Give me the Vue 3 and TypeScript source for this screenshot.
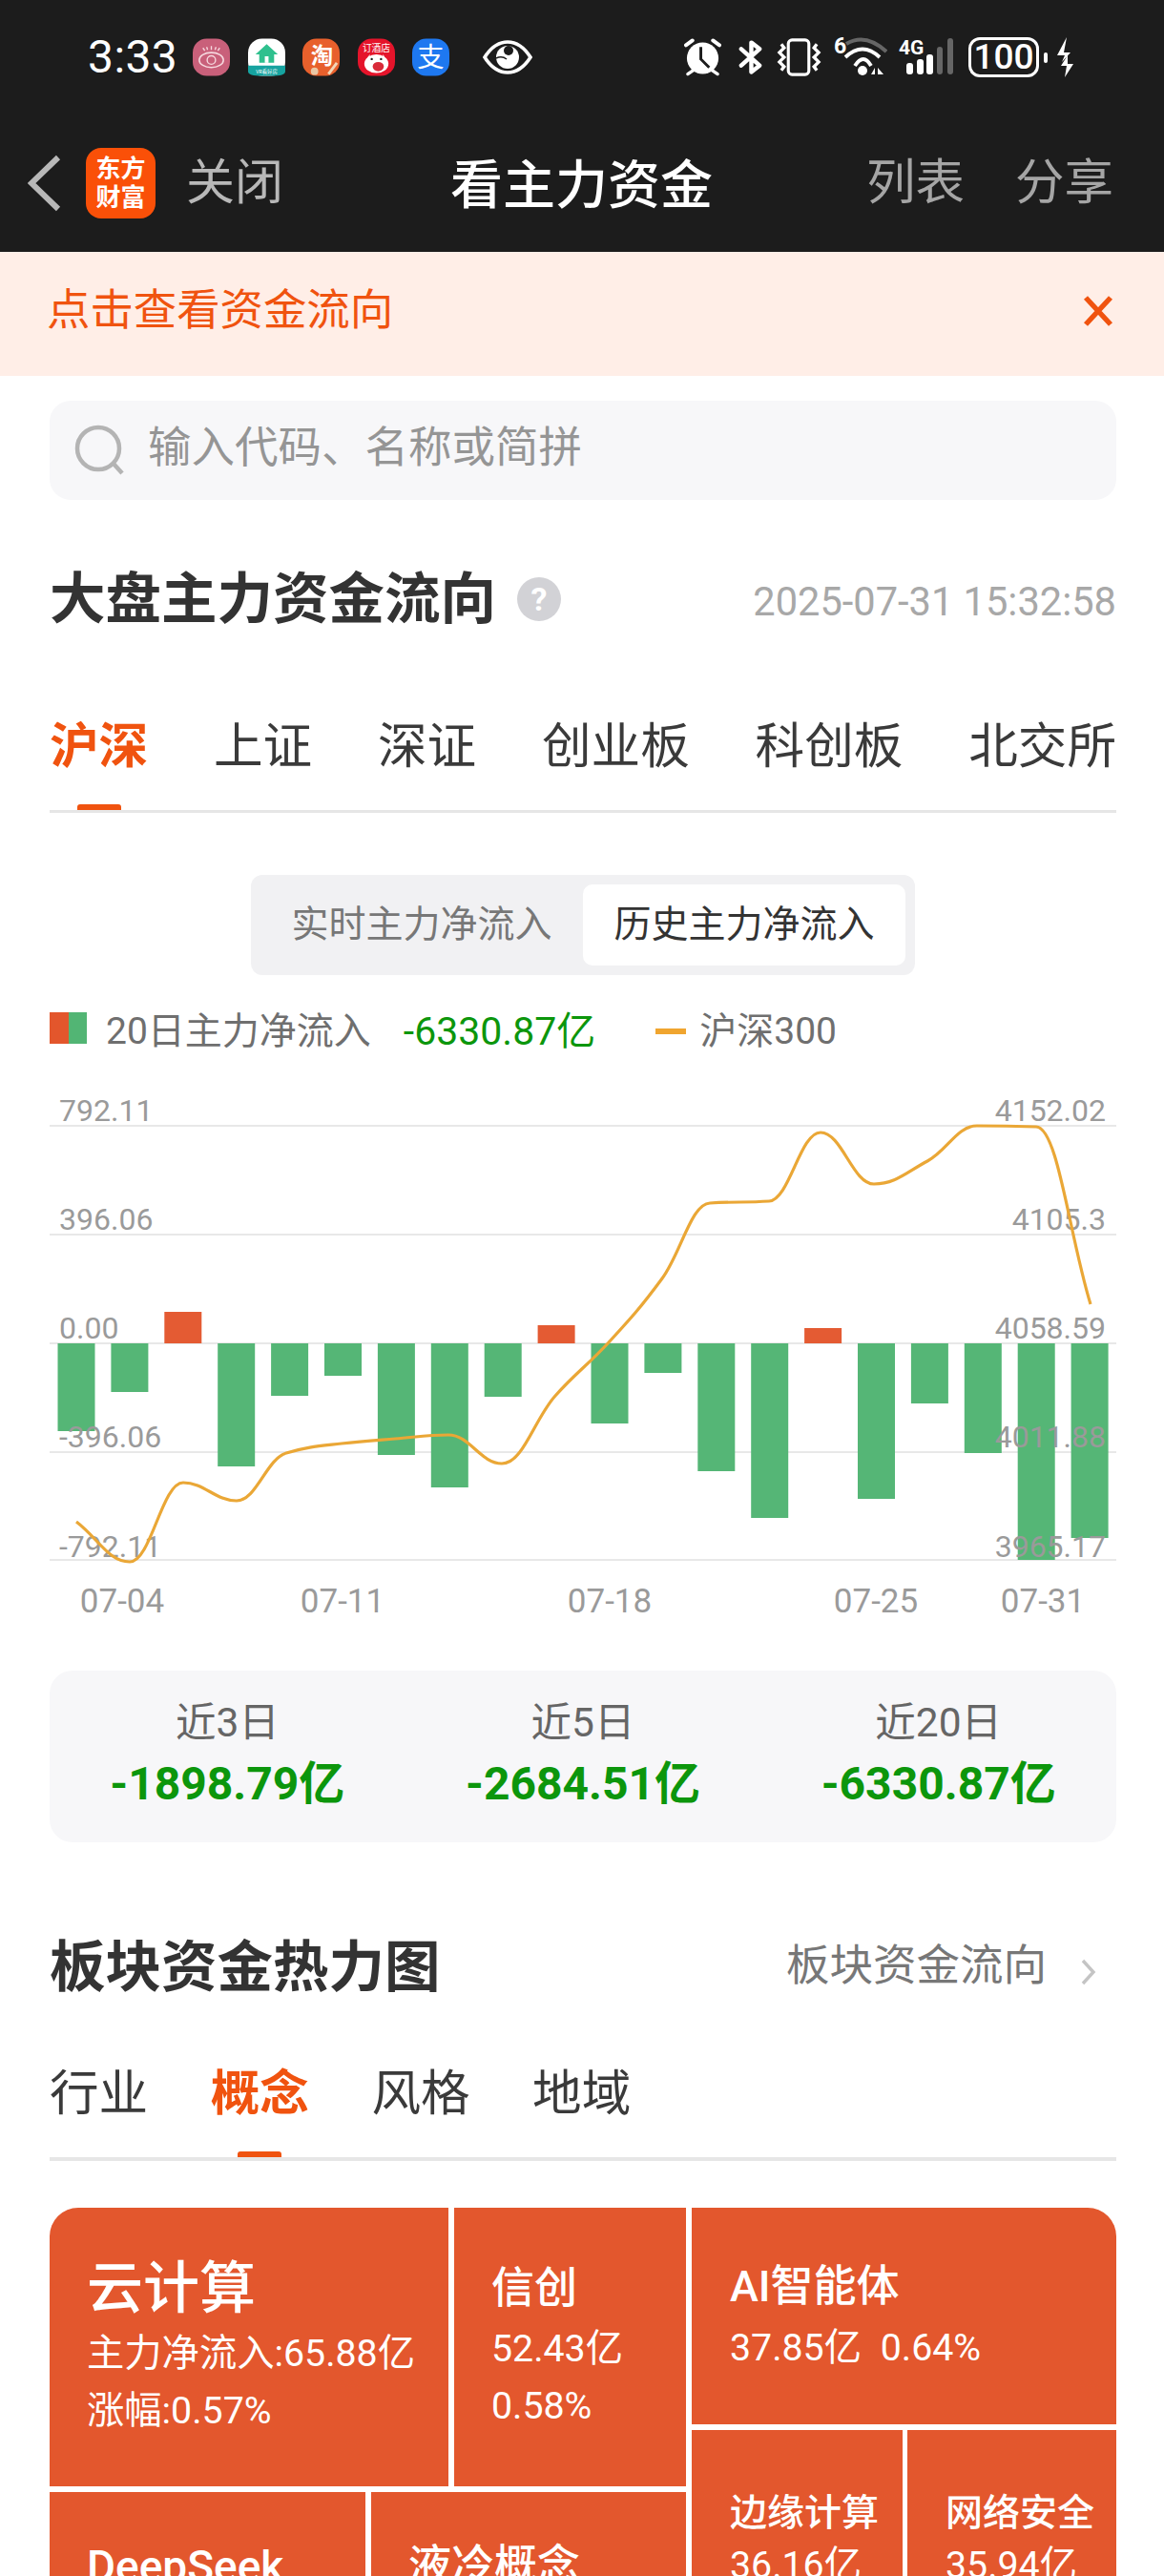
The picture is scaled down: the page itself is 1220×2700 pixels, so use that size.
<script setup lang="ts">
const bars: number[] = [-92, -51, 33, -129, -55, -34, -117, -151, -56, 19, -84, -31, -134, -183, 16, -163, -63, -115, -227, -204]
const lineX: number[] = [80, 136, 192, 248, 300, 358, 414, 470, 526, 582, 638, 694, 744, 806, 860, 916, 972, 1024, 1086, 1143]
const line: number[] = [1595, 1637, 1554, 1573, 1523, 1513, 1508, 1504, 1534, 1463, 1407, 1340, 1261, 1259, 1187, 1241, 1217, 1180, 1181, 1367]
const top0 = 1140
const left0 = 52
const zero = 1408 - top0
const barX = (i: number) => 60.5 + 55.9 * i - left0
const pts = line.map((y, i) => [lineX[i] - left0, y - top0])
function monotone(p: number[][]): string {
  const slopes = p.slice(1).map((q, i) => (q[1] - p[i][1]) / (q[0] - p[i][0]))
  const m = p.map((_, i) => {
    if (i === 0) return slopes[0]
    if (i === p.length - 1) return slopes[slopes.length - 1]
    const s0 = slopes[i - 1], s1 = slopes[i]
    if (s0 * s1 <= 0) return 0
    return (2 * s0 * s1) / (s0 + s1)
  })
  let d = `M${p[0][0]} ${p[0][1]}`
  for (let i = 0; i < p.length - 1; i++) {
    const dx = (p[i + 1][0] - p[i][0]) * 0.4
    d += ` C${p[i][0] + dx} ${p[i][1] + m[i] * dx} ${p[i + 1][0] - dx} ${p[i + 1][1] - m[i + 1] * dx} ${p[i + 1][0]} ${p[i + 1][1]}`
  }
  return d
}
const linePath = monotone(pts)
const grid = [1180, 1294, 1408, 1522, 1635].map(y => y - top0)
const leftLabels = ['792.11', '396.06', '0.00', '-396.06', '-792.11']
const rightLabels = ['4152.02', '4105.3', '4058.59', '4011.88', '3965.17']
const labelY = [1175, 1289, 1403, 1517, 1632].map(y => y - top0)
const xLabels = [
  { t: '07-04', x: 128 },
  { t: '07-11', x: 359 },
  { t: '07-18', x: 639 },
  { t: '07-25', x: 918 },
  { t: '07-31', x: 1093 }
]
const marketTabs = ['沪深', '上证', '深证', '创业板', '科创板', '北交所']
const sectorTabs = ['行业', '概念', '风格', '地域']
const stats = [
  { l: '近3日', v: '-1898.79亿' },
  { l: '近5日', v: '-2684.51亿' },
  { l: '近20日', v: '-6330.87亿' }
]
</script>

<template>
  <div class="app">
    <div class="status">
      <span class="time">3:33</span>
      <div class="apps">
        <svg class="app-ico" viewBox="0 0 40 40"><rect width="40" height="40" rx="15" fill="#c9607a"/><ellipse cx="20" cy="23" rx="13" ry="8" fill="none" stroke="#f6d8de" stroke-width="1.6"/><circle cx="20" cy="23" r="4.5" fill="none" stroke="#f6d8de" stroke-width="1.4"/><path d="M11 10l2 3M20 8v4M29 10l-2 3M15 9l1 3M25 9l-1 3" stroke="#f6d8de" stroke-width="1.4"/></svg>
        <svg class="app-ico" viewBox="0 0 40 40"><rect width="40" height="40" rx="15" fill="#fff"/><path d="M0 29h40v6q0 5-15 5H15Q0 40 0 35z" fill="#16a3a0"/><path d="M20 6 L32 17h-4v9H12v-9H8z" fill="#2fc08e"/><rect x="18" y="19" width="4" height="7" fill="#fff"/><text x="20" y="37" text-anchor="middle" class="t-vr">VR看好房</text></svg>
        <svg class="app-ico" viewBox="0 0 40 40"><rect width="40" height="40" rx="15" fill="#e8602c"/><text x="21" y="27" text-anchor="middle" class="t-tao">淘</text><path d="M28 38l9-12" stroke="#f2d7b8" stroke-width="3"/><circle cx="13" cy="35" r="4" fill="#e9c7a5"/></svg>
        <svg class="app-ico" viewBox="0 0 40 40"><rect width="40" height="40" rx="15" fill="#e5142b"/><text x="20" y="14" text-anchor="middle" class="t-hotel">订酒店</text><ellipse cx="20" cy="27" rx="13" ry="10" fill="#fff"/><path d="M13 17q-6 6 0 11M27 17q5 5 0 10" fill="#fff"/><ellipse cx="22" cy="30" rx="6" ry="5" fill="#d92b3a"/><circle cx="15" cy="22" r="1.2" fill="#222"/><circle cx="25" cy="22" r="1.2" fill="#222"/></svg>
        <svg class="app-ico" viewBox="0 0 40 40"><rect width="40" height="40" rx="15" fill="#1e78f0"/><text x="20" y="30" text-anchor="middle" class="t-ali">支</text></svg>
      </div>
      <svg class="eye" viewBox="0 0 52 36"><path d="M2 18C9 7 17 2 26 2s17 5 24 16c-7 11-15 16-24 16S9 29 2 18z" fill="none" stroke="#fff" stroke-width="3.6"/><circle cx="26" cy="18" r="12" fill="#fff"/><circle cx="27" cy="11" r="5" fill="#1c1c1c"/><path d="M14 19q6-3 11 1" fill="none" stroke="#1c1c1c" stroke-width="1.5"/></svg>
      <div class="status-right">
        <svg class="ic-alarm" viewBox="0 0 40 40"><circle cx="20" cy="21" r="17" fill="#fff"/><path d="M2 7l7-5M38 7l-7-5" stroke="#fff" stroke-width="4" stroke-linecap="round"/><path d="M4 38l6-4M36 38l-6-4" stroke="#fff" stroke-width="3.5" stroke-linecap="round"/><path d="M18 9v13l9 9" fill="none" stroke="#1c1c1c" stroke-width="3"/></svg>
        <svg class="ic-bt" viewBox="0 0 26 36"><path d="M3 9l20 18-9 7V2l9 7L3 27" fill="none" stroke="#fff" stroke-width="4.6" stroke-linejoin="round" stroke-linecap="round"/></svg>
        <svg class="ic-vib" viewBox="0 0 48 40"><rect x="12.5" y="1.5" width="22" height="37" rx="4" fill="none" stroke="#fff" stroke-width="3.2"/><path d="M5 6l3 4-5 5 5 5-5 5 5 5-3 4M43 6l-3 4 5 5-5 5 5 5-5 5 3 4" fill="none" stroke="#fff" stroke-width="3.4"/></svg>
        <div class="wifi">
          <svg viewBox="0 0 56 42"><text x="0" y="17" class="t-six">6</text><path d="M13 7Q33-5 55 15" fill="none" stroke="#666" stroke-width="4"/><path d="M12 21Q30 4 48 21" fill="none" stroke="#fff" stroke-width="3.8"/><path d="M22 30Q31 16 39 30" fill="none" stroke="#fff" stroke-width="3.8"/><circle cx="30" cy="35" r="5" fill="#fff"/><path d="M43 32l-4 7h4zM46 32l6 7h-6z" fill="#fff"/></svg>
        </div>
        <div class="signal">
          <span class="four-g">4G</span>
          <svg viewBox="0 0 58 42"><g fill="#fff"><rect x="8" y="27" width="7" height="12" rx="3"/><rect x="19" y="23" width="7" height="16" rx="3"/><rect x="29" y="18" width="7" height="21" rx="3"/></g><g fill="#666"><rect x="40" y="10" width="6" height="29" rx="3"/><rect x="51" y="1" width="6" height="38" rx="3"/></g></svg>
        </div>
        <div class="battery"><span>100</span></div>
        <i class="nub"></i>
        <svg class="bolt" viewBox="0 0 18 42"><path d="M11 0L1 19H9L6 26L15 16H8zM12 19L5 30H11L9 42L18 28H12z" fill="#fff"/></svg>
      </div>
    </div>

    <div class="nav">
      <svg class="back" viewBox="0 0 36 60"><path d="M32 3L4 30l28 27" fill="none" stroke="#b8b8b8" stroke-width="6"/></svg>
      <div class="logo"><span>东方</span><span>财富</span></div>
      <span class="nav-close">关闭</span>
      <span class="nav-title">看主力资金</span>
      <div class="nav-right"><span>列表</span><span>分享</span></div>
    </div>

    <div class="banner">
      <span>点击查看资金流向</span>
      <svg class="close" viewBox="0 0 32 34"><path d="M3 3l26 28M29 3L3 31" stroke="#f0530f" stroke-width="5.5" fill="none"/></svg>
    </div>

    <div class="page">
      <div class="search">
        <svg class="search-ico" viewBox="0 0 54 54"><circle cx="25" cy="25" r="22" fill="none" stroke="#b4b4b4" stroke-width="4.5"/><path d="M41 41l9 10" stroke="#b4b4b4" stroke-width="4.5"/></svg>
        <span>输入代码、名称或简拼</span>
      </div>

      <div class="head">
        <h2>大盘主力资金流向</h2>
        <span class="q">?</span>
        <span class="date">2025-07-31 15:32:58</span>
      </div>

      <div class="tabs market">
        <div v-for="(t, i) in marketTabs" :key="t" class="tab" :class="{ on: i === 0 }">{{ t }}</div>
      </div>

      <div class="seg">
        <div class="seg-item">实时主力净流入</div>
        <div class="seg-item active">历史主力净流入</div>
      </div>

      <div class="legend">
        <i class="sw"><b></b><b></b></i>
        <span class="lg-t">20日主力净流入</span>
        <span class="lg-v">-6330.87亿</span>
        <i class="ln"></i>
        <span class="lg-t">沪深300</span>
      </div>

      <svg class="chart" width="1118" height="560" viewBox="0 0 1118 560">
        <line v-for="y in grid" :key="y" x1="0" x2="1118" :y1="y" :y2="y" stroke="#e8e8e8" stroke-width="2"/>
        <rect
          v-for="(b, i) in bars"
          :key="i"
          :x="barX(i)"
          :y="b > 0 ? zero - b : zero"
          width="39"
          :height="Math.abs(b)"
          :fill="b > 0 ? '#e3562c' : '#4fb472'"
          fill-opacity="0.97"
        />
        <text v-for="(t, i) in leftLabels" :key="t" x="10" :y="labelY[i]" class="ax">{{ t }}</text>
        <text v-for="(t, i) in rightLabels" :key="t" x="1107" :y="labelY[i]" text-anchor="end" class="ax">{{ t }}</text>
        <path :d="linePath" fill="none" stroke="#eaa736" stroke-width="3.2"/>
        <text v-for="l in xLabels" :key="l.t" :x="l.x - 52" y="550" text-anchor="middle" class="ax x">{{ l.t }}</text>
      </svg>

      <div class="stats">
        <div v-for="s in stats" :key="s.l" class="stat">
          <div class="stat-l">{{ s.l }}</div>
          <div class="stat-v">{{ s.v }}</div>
        </div>
      </div>

      <div class="head second">
        <h2>板块资金热力图</h2>
        <span class="more">板块资金流向</span>
        <svg class="chev" viewBox="0 0 18 28"><path d="M3 2l11 12L3 26" fill="none" stroke="#c4c4c4" stroke-width="3.4"/></svg>
      </div>

      <div class="tabs sector">
        <div v-for="(t, i) in sectorTabs" :key="t" class="tab" :class="{ on: i === 1 }">{{ t }}</div>
      </div>

      <div class="map">
        <div class="map-l">
          <div class="row r1">
            <div class="cell a">
              <div class="big">云计算</div>
              <div class="sub">主力净流入:65.88亿</div>
              <div class="sub">涨幅:0.57%</div>
            </div>
            <div class="cell b">
              <div class="mid">信创</div>
              <div class="sub">52.43亿</div>
              <div class="sub">0.58%</div>
            </div>
          </div>
          <div class="row r2">
            <div class="cell d"><div class="mid deep">DeepSeek</div></div>
            <div class="cell e"><div class="mid">液冷概念</div></div>
          </div>
        </div>
        <div class="map-r">
          <div class="cell c">
            <div class="mid">AI智能体</div>
            <div class="sub pre">37.85亿  0.64%</div>
          </div>
          <div class="row r3">
            <div class="cell f">
              <div class="small">边缘计算</div>
              <div class="sub tight">36.16亿</div>
            </div>
            <div class="cell g">
              <div class="small">网络安全</div>
              <div class="sub tight">35.94亿</div>
            </div>
          </div>
        </div>
      </div>
    </div>
  </div>
</template>

<style>
html, body { margin: 0; background: #fff; }
</style>

<style scoped>
.app { width: 1220px; height: 2700px; overflow: hidden; background: #fff; font-family: Roboto, "Noto Sans CJK SC", sans-serif; color: #333; }
.status { height: 120px; background: #1c1c1c; display: flex; align-items: center; padding-left: 92px; box-sizing: border-box; color: #fff; }
.time { font-size: 48px; line-height: 60px; width: 110px; letter-spacing: .4px; }
.apps { display: flex; gap: 18.5px; }
.app-ico { width: 39px; height: 40px; display: block; }
.t-vr { font-size: 5.5px; fill: #fff; font-family: "Noto Sans CJK SC", sans-serif; }
.t-tao { font-size: 24px; fill: #fff; font-weight: 700; font-family: "Noto Sans CJK SC", sans-serif; }
.t-hotel { font-size: 10px; fill: #fff; font-family: "Noto Sans CJK SC", sans-serif; }
.t-ali { font-size: 29px; fill: #fff; font-family: "Noto Sans CJK SC", sans-serif; }
.eye { width: 52px; height: 36px; margin-left: 35px; }
.status-right { display: flex; align-items: center; margin-left: 159px; height: 44px; }
.ic-alarm { width: 39px; height: 40px; }
.ic-bt { width: 25px; height: 36px; margin-left: 18px; }
.ic-vib { width: 47px; height: 40px; margin-left: 15px; }
.wifi { width: 56px; height: 42px; margin-left: 13px; }
.wifi svg { width: 56px; height: 42px; display: block; }
.t-six { font-size: 23px; font-weight: 700; fill: #fff; font-family: Roboto, sans-serif; }
.signal { position: relative; width: 58px; height: 42px; margin-left: 12px; }
.signal svg { width: 58px; height: 42px; display: block; }
.four-g { position: absolute; left: 0; top: 1px; font-size: 21px; line-height: 20px; font-weight: 700; color: #fff; }
.battery { width: 74px; height: 42px; margin-left: 15px; border: 3px solid #fff; border-radius: 12px; box-sizing: border-box; display: flex; align-items: center; justify-content: center; }
.battery span { font-size: 37px; line-height: 36px; font-weight: 500; color: #fff; }
.nub { width: 4px; height: 11px; margin-left: 5px; background: #fff; border-radius: 2px; display: block; }
.bolt { width: 18px; height: 42px; margin-left: 9px; }

.nav { height: 144px; background: #1c1c1c; display: flex; align-items: center; padding-left: 29px; box-sizing: border-box; }
.back { width: 36px; height: 60px; }
.logo { width: 73px; height: 74px; margin-left: 25px; border-radius: 16px; background: #fa5008; color: #fff; display: flex; flex-direction: column; align-items: center; justify-content: center; font-size: 26px; line-height: 30px; font-weight: 700; }
.nav-close { margin-left: 32px; font-size: 51px; line-height: 60px; color: #b8b8b8; }
.nav-title { margin-left: 175px; margin-top: 3px; font-size: 55px; line-height: 60px; color: #fff; font-weight: 500; }
.nav-right { margin-left: auto; margin-right: 53px; display: flex; gap: 53px; font-size: 51.5px; line-height: 60px; color: #a5a5a5; }

.banner { height: 130px; background: #ffeee7; display: flex; align-items: center; justify-content: space-between; padding: 0 53px 0 49px; box-sizing: border-box; color: #f0530f; font-size: 45.4px; line-height: 54px; }
.banner span { margin-bottom: 6px; }
.close { width: 32px; height: 34px; margin-bottom: 6px; }

.page { padding: 0 50px 0 52px; }
.search { margin-top: 26px; height: 104px; background: #f7f7f9; border-radius: 22px; display: flex; align-items: center; padding-left: 26px; box-sizing: border-box; color: #959595; font-size: 45.5px; line-height: 60px; }
.search span { margin-bottom: 4px; }
.search-ico { width: 54px; height: 54px; margin-right: 23px; }

.head { margin-top: 66px; height: 76px; display: flex; align-items: center; }
.head h2 { margin: 0; font-size: 58.5px; line-height: 76px; font-weight: 700; color: #333; }
.q { margin-left: 22px; width: 46px; height: 46px; border-radius: 50%; background: #d2d2d6; color: #fff; font-size: 34px; line-height: 46px; text-align: center; font-weight: 700; }
.date { margin-left: auto; font-size: 41.6px; color: #a8a8a8; margin-top: 4px; }

.tabs { display: flex; padding-bottom: 26px; border-bottom: 3px solid #e6e6e6; }
.tab { position: relative; font-size: 51.6px; line-height: 80px; color: #3a3a3a; }
.tab.on { color: #f0530f; font-weight: 700; }
.tab.on::after { content: ""; position: absolute; left: 50%; bottom: -26px; width: 46px; margin-left: -23px; height: 6px; border-radius: 3px 3px 0 0; background: #f0530f; }
.market { margin-top: 77px; justify-content: space-between; }
.sector { margin-top: 55px; gap: 65.5px; border-bottom-width: 4px; }

.seg { margin: 65px auto 0; width: 696px; height: 105px; padding: 10px; box-sizing: border-box; background: #f1f1f3; border-radius: 12px; display: flex; }
.seg-item { flex: 1; text-align: center; font-size: 39px; line-height: 85px; color: #777; }
.seg-item.active { background: #fff; color: #333; border-radius: 10px; }

.legend { margin-top: 41px; height: 36px; display: flex; align-items: center; font-size: 39px; line-height: 36px; color: #6f6f6f; }
.sw { width: 39px; height: 33px; display: flex; margin-right: 20px; margin-top: -7px; }
.sw b { flex: 1; }
.sw b:first-child { background: #e3562c; }
.sw b:last-child { background: #52b574; }
.lg-t { white-space: nowrap; }
.lg-v { margin-left: 34px; font-size: 41px; color: #0c960c; }
.ln { width: 32px; height: 6px; background: #f0a52f; margin-left: 63px; margin-right: 14px; }

.chart { display: block; margin-top: 41px; }
.ax { font-size: 32px; fill: #9a9a9a; font-family: Roboto, sans-serif; }
.x { font-size: 35px; }

.stats { margin-top: 51px; height: 180px; background: #f7f7f9; border-radius: 24px; display: flex; padding-top: 28px; box-sizing: border-box; }
.stat { flex: 1; text-align: center; }
.stat-l { font-size: 42.5px; line-height: 54px; color: #666; }
.stat-v { font-size: 48px; line-height: 66px; font-weight: 700; color: #0c960c; margin-top: 4px; }

.head.second { margin-top: 93px; }
.more { margin-left: auto; font-size: 45.5px; line-height: 60px; color: #777; margin-top: -2px; }
.chev { width: 18px; height: 28px; margin-left: 35px; margin-right: 20px; margin-top: 10px; }

.map { margin-top: 49px; display: flex; gap: 6px; border-radius: 30px 30px 0 0; overflow: hidden; }
.map-l { width: 667px; display: flex; flex-direction: column; gap: 6px; }
.map-r { width: 445px; display: flex; flex-direction: column; gap: 6px; }
.row { display: flex; gap: 6px; }
.r1 { height: 292px; }
.r2 { height: 200px; }
.r3 { height: 265px; gap: 5px; }
.cell { background: #e3572d; color: #fff; box-sizing: border-box; overflow: hidden; }
.a { width: 418px; padding: 46px 0 0 39px; }
.b { width: 243px; padding: 51px 0 0 39px; }
.c { height: 227px; padding: 49px 0 0 40px; }
.d { width: 331px; padding: 45px 0 0 39px; }
.e { width: 330px; padding: 44px 0 0 39px; }
.f { width: 221px; padding: 60px 0 0 40px; }
.g { width: 219px; padding: 60px 0 0 40px; }
.big { font-size: 59px; line-height: 77px; font-weight: 500; }
.mid { font-size: 45px; line-height: 67px; font-weight: 500; white-space: nowrap; }
.deep { font-size: 46px; }
.c .mid { line-height: 68px; }
.small { font-size: 39px; line-height: 54px; font-weight: 500; white-space: nowrap; }
.sub { font-size: 39.3px; line-height: 60px; white-space: nowrap; }
.sub.pre { white-space: pre; word-spacing: 10px; }
.sub.tight { line-height: 56px; }
</style>
